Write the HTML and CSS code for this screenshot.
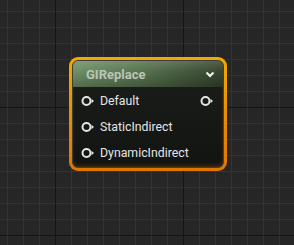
FILE: index.html
```html
<!DOCTYPE html>
<html lang="en">
<head>
  <meta charset="UTF-8">
  <meta name="viewport" content="width=device-width, initial-scale=1.0">
  <title>GIReplace</title>
  <link rel="stylesheet" href="styles.css">
</head>
<body>
  <div class="graph">
    <!-- Material node, selected -->
    <div class="node">
      <div class="node-inner">
        <div class="node-header">
          <span class="node-title">GIReplace</span>
          <svg class="chevron" width="10" height="7" viewBox="0 0 10 7">
            <polyline points="1.5,1.5 5,5 8.5,1.5" fill="none" stroke="#f2f2f2" stroke-width="2.2"/>
          </svg>
        </div>
        <div class="node-body">
          <div class="pin-row">
            <div class="pin">
              <svg width="14" height="12" viewBox="0 0 14 12">
                <circle cx="5.5" cy="6" r="4" fill="none" stroke="#e4e4e4" stroke-width="2"/>
                <polygon points="10.5,3.8 13,6 10.5,8.2" fill="#e4e4e4"/>
              </svg>
              <span class="pin-label">Default</span>
            </div>
            <div class="pin">
              <svg width="14" height="12" viewBox="0 0 14 12">
                <circle cx="5.5" cy="6" r="4" fill="none" stroke="#e4e4e4" stroke-width="2"/>
                <polygon points="10.5,3.8 13,6 10.5,8.2" fill="#e4e4e4"/>
              </svg>
            </div>
          </div>
          <div class="pin-row">
            <div class="pin">
              <svg width="14" height="12" viewBox="0 0 14 12">
                <circle cx="5.5" cy="6" r="4" fill="none" stroke="#e4e4e4" stroke-width="2"/>
                <polygon points="10.5,3.8 13,6 10.5,8.2" fill="#e4e4e4"/>
              </svg>
              <span class="pin-label">StaticIndirect</span>
            </div>
          </div>
          <div class="pin-row">
            <div class="pin">
              <svg width="14" height="12" viewBox="0 0 14 12">
                <circle cx="5.5" cy="6" r="4" fill="none" stroke="#e4e4e4" stroke-width="2"/>
                <polygon points="10.5,3.8 13,6 10.5,8.2" fill="#e4e4e4"/>
              </svg>
              <span class="pin-label">DynamicIndirect</span>
            </div>
          </div>
        </div>
      </div>
    </div>
  </div>
</body>
</html>
```

FILE: styles.css
```css
body {
  margin: 0;
  padding: 0;
  font-family: Roboto, "Liberation Sans", sans-serif;
}

/* Graph canvas with minor (16px) and major (128px) grid lines */
.graph {
  position: relative;
  width: 294px;
  height: 245px;
  overflow: hidden;
  background-color: #262626;
  background-image:
    linear-gradient(90deg, #151515 1px, transparent 1px),
    linear-gradient(#151515 1px, transparent 1px),
    linear-gradient(90deg, #333333 1px, transparent 1px),
    linear-gradient(#333333 1px, transparent 1px);
  background-size: 128px 128px, 128px 128px, 16px 16px, 16px 16px;
  background-position: 55px 107px, 55px 107px, 7px 11px, 7px 11px;
}

/* Orange selection outline */
.node {
  position: absolute;
  left: 69px;
  top: 57px;
  width: 158px;
  padding: 3px;
  box-sizing: border-box;
  border-radius: 9px;
  background: linear-gradient(#f2aa00, #e88a00 60%, #e07400);
}

.node-inner {
  border: 1px solid #3e3f3a;
  border-radius: 6px;
  overflow: hidden;
  background: linear-gradient(#1b1e1b, #121412);
  box-shadow: inset 0 -2px 3px rgba(90, 55, 10, 0.6);
}

.node-header {
  display: flex;
  align-items: center;
  justify-content: space-between;
  height: 26px;
  padding: 0 8px 0 13px;
  background:
    linear-gradient(rgba(255, 255, 255, 0.14), rgba(255, 255, 255, 0) 40%, rgba(0, 0, 0, 0.25)),
    linear-gradient(90deg, #6f9067, #57744f 45%, #37442f);
}

.node-title {
  font-size: 13px;
  font-weight: bold;
  color: #bcc4b8;
}

.chevron {
  display: block;
}

.node-body {
  padding: 1px 0 1px 0;
}

.pin-row {
  display: flex;
  align-items: center;
  justify-content: space-between;
  height: 26px;
  padding: 0 9px 0 8px;
}

.pin {
  display: flex;
  align-items: center;
  gap: 5px;
}

.pin svg {
  display: block;
}

.pin-label {
  font-size: 12.3px;
  color: #e6e6e6;
}
```
